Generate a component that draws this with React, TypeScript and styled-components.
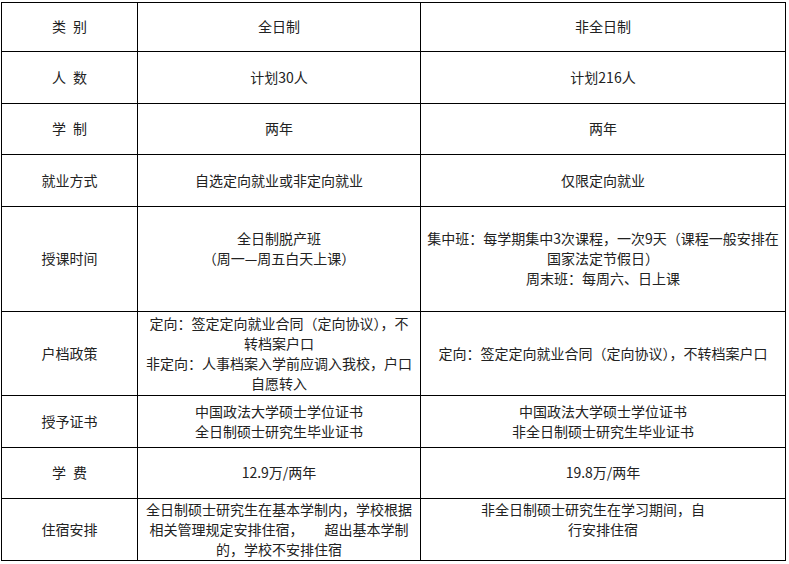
import React from "react";
import styled, { createGlobalStyle } from "styled-components";

const GlobalStyle = createGlobalStyle`
  html,
  body {
    margin: 0;
    padding: 0;
    background: #fff;
  }
  body {
    font-family: "Noto Sans CJK SC", "Noto Sans", sans-serif;
    font-size: 14px;
    color: #222;
  }
`;

const Page = styled.div`
  padding: 2px 0 0 1px;
`;

const Table = styled.div`
  display: grid;
  width: 784px;
  grid-template-columns: 136px 283px 365px;
  grid-template-rows: 49px 52px 51px 52px 105px 84px 52px 51px 62px;
  border-top: 1px solid #000;
  border-left: 1px solid #000;
`;

const Cell = styled.div`
  box-sizing: border-box;
  display: flex;
  flex-direction: column;
  justify-content: center;
  align-items: center;
  padding: 0 5px 2px;
  border-right: 1px solid #000;
  border-bottom: 1px solid #000;
  overflow: hidden;
`;

const Line = styled.div`
  line-height: 20px;
  min-height: 20px;
  white-space: nowrap;
  text-align: center;
`;

// trailing blank the original kept after a line
const Trail = styled.span`
  display: inline-block;
  width: 20px;
`;

type Row = {
  label: string;
  full: React.ReactNode[];
  part: React.ReactNode[];
};

const rows: Row[] = [
  { label: "类\u2002别", full: ["全日制"], part: ["非全日制"] },
  { label: "人\u2002数", full: ["计划30人"], part: ["计划216人"] },
  { label: "学\u2002制", full: ["两年"], part: ["两年"] },
  {
    label: "就业方式",
    full: ["自选定向就业或非定向就业"],
    part: ["仅限定向就业"],
  },
  {
    label: "授课时间",
    full: ["全日制脱产班", "（周一—周五白天上课）", ""],
    part: [
      "集中班：每学期集中3次课程，一次9天（课程一般安排在",
      "国家法定节假日）",
      "周末班：每周六、日上课",
    ],
  },
  {
    label: "户档政策",
    full: [
      "定向：签定定向就业合同（定向协议），不",
      "转档案户口",
      "非定向：人事档案入学前应调入我校，户口",
      "自愿转入",
    ],
    part: ["定向：签定定向就业合同（定向协议），不转档案户口"],
  },
  {
    label: "授予证书",
    full: ["中国政法大学硕士学位证书", "全日制硕士研究生毕业证书"],
    part: ["中国政法大学硕士学位证书", "非全日制硕士研究生毕业证书"],
  },
  { label: "学\u2002费", full: ["12.9万/两年"], part: ["19.8万/两年"] },
  {
    label: "住宿安排",
    full: [
      "全日制硕士研究生在基本学制内，学校根据",
      "相关管理规定安排住宿，\u3000\u3000超出基本学制",
      "的，学校不安排住宿",
    ],
    part: [
      <>
        非全日制硕士研究生在学习期间，自
        <Trail />
      </>,
      "行安排住宿",
      "",
    ],
  },
];

const Lines: React.FC<{ items: React.ReactNode[] }> = ({ items }) => (
  <>
    {items.map((t, i) => (
      <Line key={i}>{t}</Line>
    ))}
  </>
);

export default function App() {
  return (
    <Page>
      <GlobalStyle />
      <Table>
        {rows.map((r) => (
          <React.Fragment key={r.label}>
            <Cell>
              <Line>{r.label}</Line>
            </Cell>
            <Cell>
              <Lines items={r.full} />
            </Cell>
            <Cell>
              <Lines items={r.part} />
            </Cell>
          </React.Fragment>
        ))}
      </Table>
    </Page>
  );
}
